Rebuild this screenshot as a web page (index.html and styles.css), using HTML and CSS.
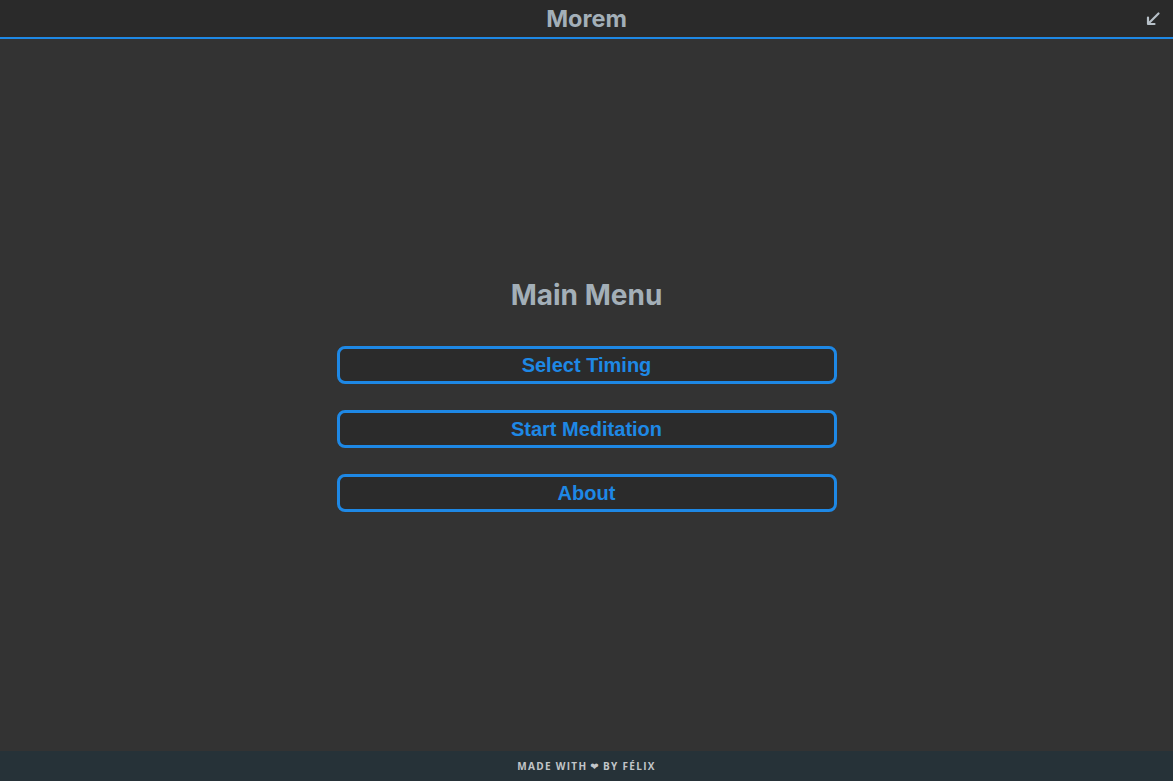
FILE: index.html
```html
<!DOCTYPE html>
<html>
<head>
<meta charset="utf-8">
<link rel="stylesheet" href="styles.css">
</head>
<body>
<div class="app">
  <header class="topbar">
    <h1 class="brand">Morem</h1>
    <button class="shrink" aria-label="minimize">
      <svg width="16" height="16" viewBox="0 0 16 16"><path d="M13.5 2.5 L3.5 12.5 M3 6.5 V13 H9.5" fill="none" stroke="#b7c0c8" stroke-width="2.2" stroke-linecap="round" stroke-linejoin="round"/></svg>
    </button>
  </header>
  <main class="main">
    <section class="menu">
      <h2 class="menu-title">Main Menu</h2>
      <button class="menu-btn">Select Timing</button>
      <button class="menu-btn">Start Meditation</button>
      <button class="menu-btn">About</button>
    </section>
  </main>
  <footer class="footer">MADE WITH <span class="heart">❤</span> BY FÉLIX</footer>
</div>
</body>
</html>
```

FILE: styles.css
```css
html, body {
  margin: 0;
  padding: 0;
  height: 100%;
}
body {
  background: #333333;
  font-family: Inter, "Liberation Sans", sans-serif;
}
.app {
  display: flex;
  flex-direction: column;
  height: 100vh;
}
.topbar {
  height: 37px;
  background: #2a2a2a;
  border-bottom: 2px solid #1e88e5;
  display: flex;
  align-items: center;
  justify-content: center;
  position: relative;
  flex-shrink: 0;
}
.brand {
  margin: 0;
  font-size: 23.5px;
  font-weight: 700;
  color: #a3afb8;
  line-height: 1;
}
.shrink {
  position: absolute;
  right: 12px;
  top: 11px;
  background: none;
  border: none;
  padding: 0;
  width: 16px;
  height: 16px;
}
.main {
  flex: 1;
  display: flex;
  align-items: center;
  justify-content: center;
}
.menu {
  display: flex;
  flex-direction: column;
  align-items: center;
  gap: 26px;
  width: 500px;
  margin-top: 0;
}
.menu-title {
  margin: 0 0 8px;
  font-size: 28px;
  font-weight: 700;
  color: #a3afb8;
  line-height: 34px;
}
.menu-btn {
  width: 500px;
  height: 38px;
  box-sizing: border-box;
  background: #2b2b2b;
  border: 3px solid #1e88e5;
  border-radius: 8px;
  color: #1e88e5;
  font-family: "Liberation Sans", Arial, sans-serif;
  font-weight: 700;
  font-size: 20px;
  padding: 0;
}
.footer {
  height: 30px;
  flex-shrink: 0;
  background: #263238;
  color: #c2c6c9;
  font-family: "Open Sans", "Liberation Sans", sans-serif;
  font-weight: 700;
  font-size: 10px;
  letter-spacing: 1.3px;
  display: flex;
  align-items: center;
  justify-content: center;
}
.heart {
  margin: 0 3px;
  font-family: "DejaVu Sans", sans-serif;
}
```
